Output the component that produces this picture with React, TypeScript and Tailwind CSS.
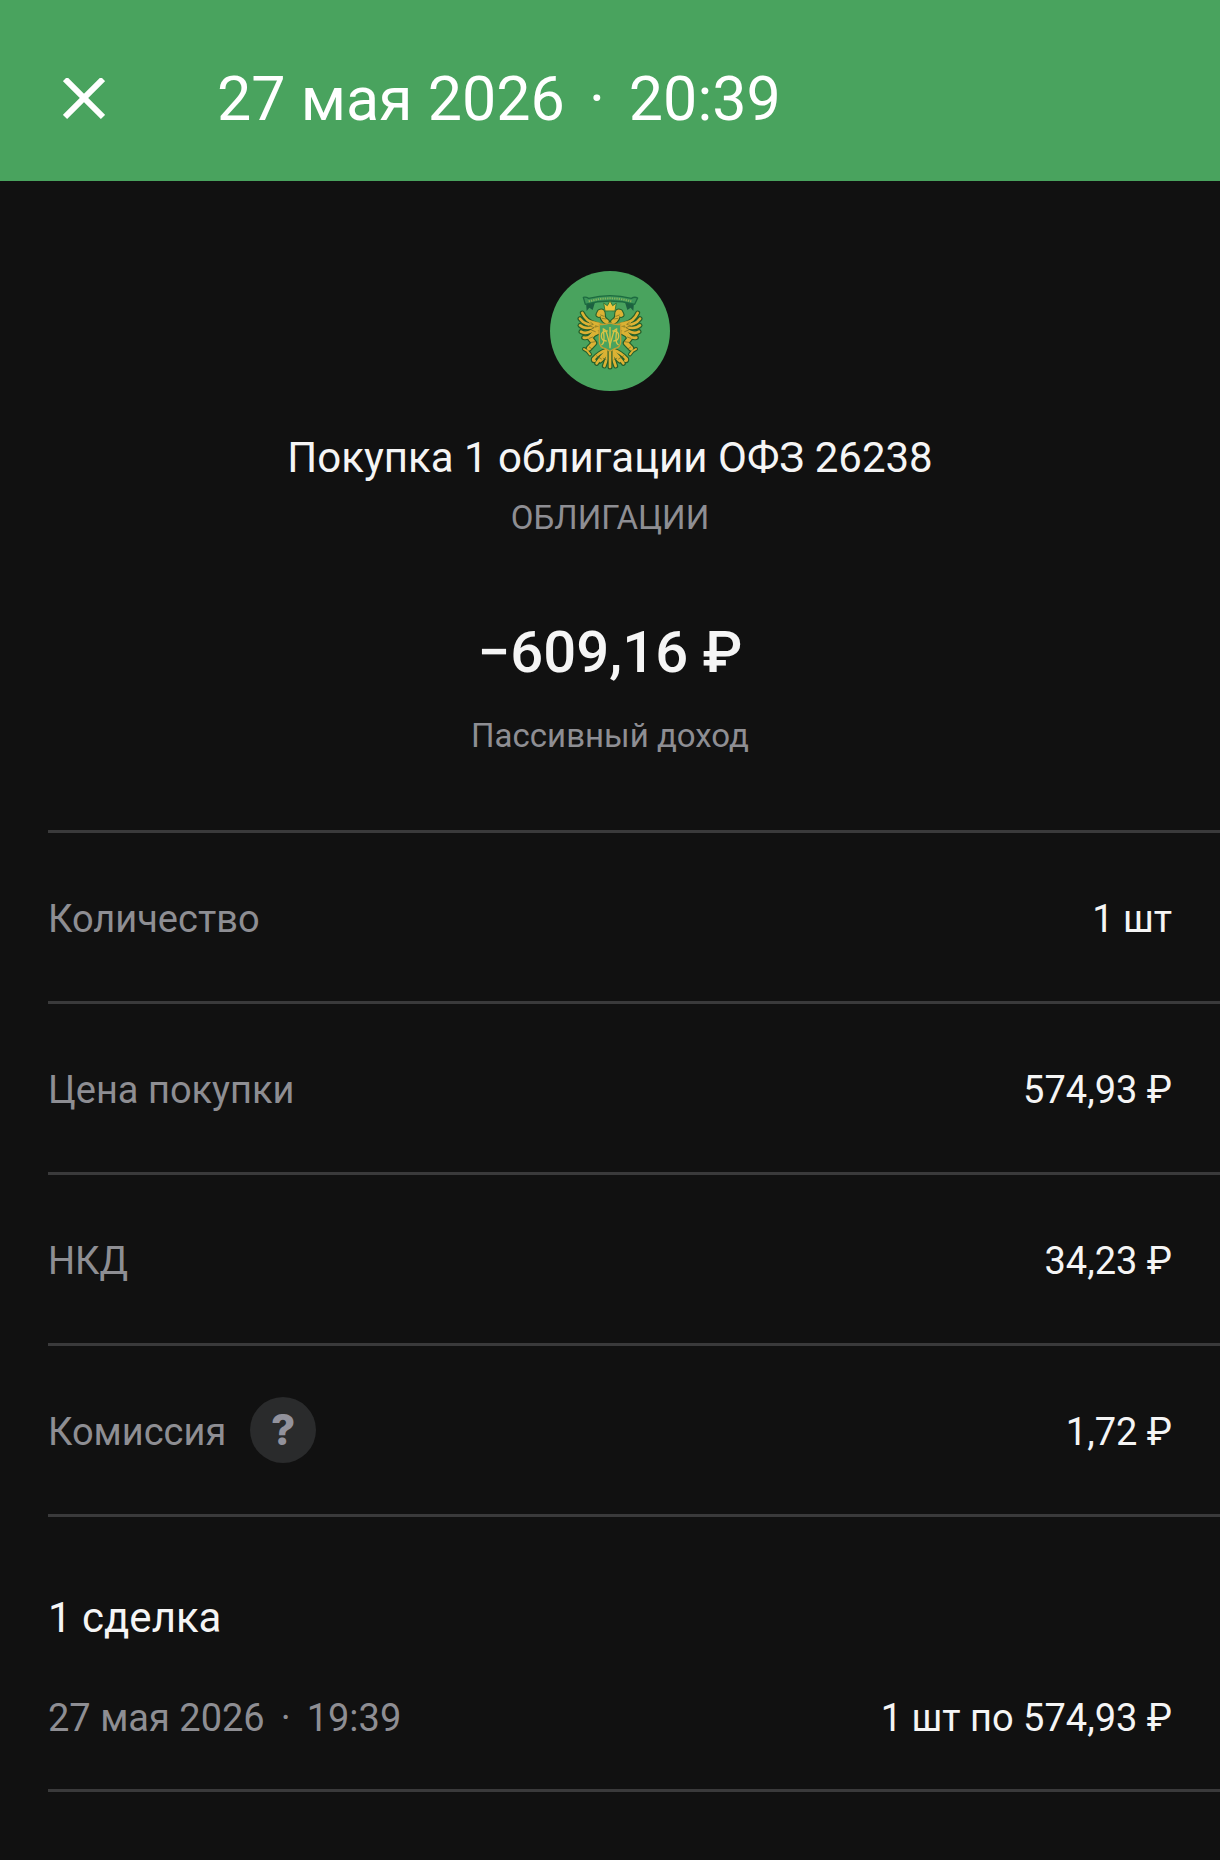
import React from "react";

interface DetailProps {
  label: string;
  value: string;
  hint?: boolean;
}

const labelText = "pt-1 text-[38px] leading-[48px] text-[#8e8e93]";
const valueText = "pt-1 text-[38px] leading-[48px] text-[#f5f5f5]";
const captionText = "text-[33px] leading-[42px] text-[#8e8e93]";

const wingFeathers = [
  "M164 186 Q138 178 127 154",
  "M162 190 Q134 190 120 171",
  "M160 196 Q134 204 120 191",
  "M162 203 Q138 220 123 210",
  "M166 209 Q148 232 131 228",
];

const tailFeathers = [
  "M198 266 Q178 272 160 292 Q158 298 164 297",
  "M200 268 Q182 286 170 305",
  "M203 270 Q190 292 181 298",
  "M206 270 Q200 296 193 313",
];

const head = "M200 180 Q186 172 188 158 Q188 147 180 151 L176 159";
const leg = "M170 212 Q156 216 151 230 L162 244 L147 260";
const orb = "M132 262 L142 268 L150 278";

// One half of the eagle, the other half is mirrored around x = 210
const Half = () => (
  <g fill="none" strokeLinecap="round" strokeLinejoin="round">
    <g stroke="#255f2b" strokeWidth="15">
      {wingFeathers.map((d) => (
        <path key={d} d={d} />
      ))}
      {tailFeathers.map((d) => (
        <path key={d} d={d} />
      ))}
      <path d={head} strokeWidth="19" />
      <path d={leg} strokeWidth="20" />
      <path d={orb} strokeWidth="12" />
    </g>
    <path d="M148 176 L184 186 V216 L158 214 Z" fill="#a08c28" stroke="#a08c28" strokeWidth="4" />
    <g stroke="#dcb234" strokeWidth="8">
      {wingFeathers.map((d) => (
        <path key={d} d={d} />
      ))}
      {tailFeathers.map((d) => (
        <path key={d} d={d} />
      ))}
      <path d={head} strokeWidth="13" />
      <path d="M176 188 L160 184 M176 200 L164 204" strokeWidth="10" />
      <path d={leg} strokeWidth="13" />
      <path d={orb} strokeWidth="6" />
    </g>
    <g stroke="#6c6a22" strokeWidth="2">
      <path d="M152 182 L160 188 L148 192 L162 198 L152 204 L166 210" />
      <path d="M148 230 L158 226 M154 242 L166 240 M148 256 L156 262" />
      <path d="M182 160 L192 164 M186 170 L198 172" />
      <path d="M176 286 L184 292 M190 290 L198 294 M170 282 L176 290" />
    </g>
  </g>
);

const Emblem = () => (
  <svg viewBox="30 28 360 360" className="h-[120px] w-[120px]" aria-hidden="true">
    <circle cx="210" cy="208" r="180" fill="#49a35e" />
    <path d="M138 122 L165 122 L158 145 L148 138 L140 148 Z" fill="#1d6040" />
    <path d="M282 122 L255 122 L262 145 L272 138 L280 148 Z" fill="#1d6040" />
    <path
      d="M130 107 Q138 105 146 110 Q210 94 274 110 Q284 104 293 109 L284 128 Q210 108 136 128 Z"
      fill="#3b9458"
      stroke="#1d6b40"
      strokeWidth="4"
      strokeLinejoin="round"
    />
    <path d="M146 119 Q210 101 274 119" fill="none" stroke="#84b45c" strokeWidth="6" strokeDasharray="4 3" />
    <Half />
    <g transform="matrix(-1 0 0 1 420 0)">
      <Half />
    </g>
    <path d="M210 264 V316" stroke="#255f2b" strokeWidth="15" strokeLinecap="round" />
    <path d="M210 264 V316" stroke="#dcb234" strokeWidth="8" strokeLinecap="round" />
    <path
      d="M195 148 L191 124 L202 132 L210 117 L218 132 L229 124 L225 148 Z"
      fill="#ecc53e"
      stroke="#397a37"
      strokeWidth="3"
    />
    <path d="M199 152 Q210 147 221 152 L218 166 Q210 174 202 166 Z" fill="#49a35e" />
    <path
      d="M178 188 Q194 190 210 184 Q226 190 242 188 V240 Q242 256 224 261 L210 269 L196 261 Q178 256 178 240 Z"
      fill="#49a35e"
      stroke="#c79f30"
      strokeWidth="4"
    />
    <g fill="none" stroke="#d8c445" strokeWidth="4">
      <path d="M184 250 Q193 246 192 226 L190 202 Q198 204 201 218 L210 250 L219 218 Q222 204 230 202 L228 226 Q227 246 236 250" />
      <path d="M203 208 Q184 207 184 223 Q184 238 200 238" />
      <path d="M217 208 Q236 207 236 223 Q236 238 220 238" />
      <path d="M210 196 V260" />
    </g>
  </svg>
);

const Detail = ({ label, value, hint }: DetailProps) => (
  <div className="flex h-[171px] items-center justify-between border-b-3 border-[#3a3a3b] pr-12">
    <dt className="flex items-center gap-6">
      <span className={labelText}>{label}</span>
      {hint && (
        <button
          type="button"
          aria-label="Подробнее о комиссии"
          className="flex h-[66px] w-[66px] items-center justify-center rounded-full bg-[#2a2b2c] font-[Inter,sans-serif] text-[42px] leading-[48px] font-extrabold text-[#92929c]"
        >
          ?
        </button>
      )}
    </dt>
    <dd className={valueText}>{value}</dd>
  </div>
);

const details: DetailProps[] = [
  { label: "Количество", value: "1 шт" },
  { label: "Цена покупки", value: "574,93 ₽" },
  { label: "НКД", value: "34,23 ₽" },
  { label: "Комиссия", value: "1,72 ₽", hint: true },
];

const App = () => {
  return (
    <div className="min-h-screen bg-[#111111] font-[Roboto,sans-serif] text-[#f5f5f5]">
      <header className="flex h-[181px] items-center bg-[#49a35e] pt-4 pl-[63px] text-white">
        <button type="button" aria-label="Закрыть" className="h-[42px] w-[42px]">
          <svg viewBox="0 0 42 42" className="h-full w-full" fill="none" stroke="currentColor" strokeWidth="6">
            <path d="M2 1 L40 39 M40 1 L2 39" />
          </svg>
        </button>
        <h1 className="ml-28 flex gap-6 text-[61px] leading-[72px]">
          <span>27 мая 2026</span>
          <span>·</span>
          <span>20:39</span>
        </h1>
      </header>

      <main>
        <section className="flex flex-col items-center pt-[90px] pb-[73px] text-center">
          <Emblem />
          <h2 className="mt-10 text-[42px] leading-[54px]">Покупка 1 облигации ОФЗ 26238</h2>
          <p className={`mt-3 ${captionText}`}>ОБЛИГАЦИИ</p>
          <p className="mt-[77px] text-[58px] leading-[72px] font-medium">−609,16 ₽</p>
          <p className={`mt-[27px] ${captionText}`}>Пассивный доход</p>
        </section>

        <dl className="ml-12 border-t-3 border-[#3a3a3b]">
          {details.map((detail) => (
            <Detail key={detail.label} {...detail} />
          ))}
        </dl>

        <section className="ml-12 border-b-3 border-[#3a3a3b] pt-[74px] pr-12 pb-[47px]">
          <h2 className="text-[42px] leading-[54px]">1 сделка</h2>
          <div className="mt-[45px] flex items-center justify-between">
            <div className={`flex gap-4 ${labelText}`}>
              <span>27 мая 2026</span>
              <span>·</span>
              <span>19:39</span>
            </div>
            <span className={valueText}>1 шт по 574,93 ₽</span>
          </div>
        </section>
      </main>
    </div>
  );
};

export default App;
